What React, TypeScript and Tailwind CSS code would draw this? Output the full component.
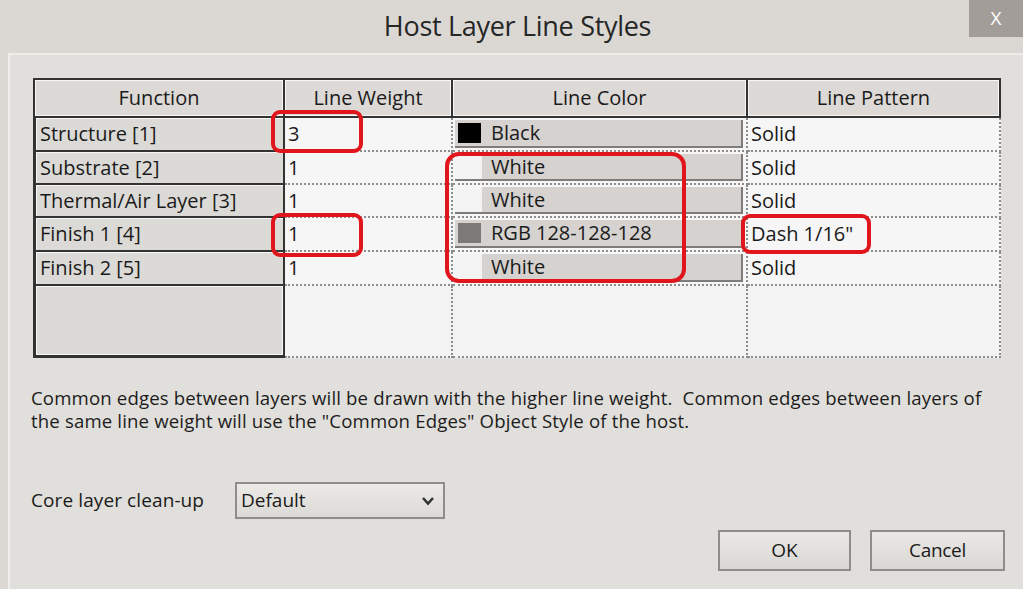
import React from 'react'

interface Layer {
  fn: string
  weight: string
  color: string
  swatch: 'black' | 'white' | 'gray'
  pattern: string
  h: string
}

const layers: Layer[] = [
  { fn: 'Structure [1]', weight: '3', color: 'Black', swatch: 'black', pattern: 'Solid', h: 'h-[34px]' },
  { fn: 'Substrate [2]', weight: '1', color: 'White', swatch: 'white', pattern: 'Solid', h: 'h-[33px]' },
  { fn: 'Thermal/Air Layer [3]', weight: '1', color: 'White', swatch: 'white', pattern: 'Solid', h: 'h-[33px]' },
  { fn: 'Finish 1 [4]', weight: '1', color: 'RGB 128-128-128', swatch: 'gray', pattern: 'Dash 1/16"', h: 'h-[34px]' },
  { fn: 'Finish 2 [5]', weight: '1', color: 'White', swatch: 'white', pattern: 'Solid', h: 'h-[34px]' },
]

function Swatch({ kind }: { kind: Layer['swatch'] }) {
  if (kind === 'black') return <div className="w-[27px] h-full p-[3px] pr-[1px] bg-[#d5d2cf]"><div className="w-full h-full bg-black" /></div>
  if (kind === 'gray') return <div className="w-[27px] h-full p-[3px] pr-[1px] bg-[#d5d2cf]"><div className="w-full h-full bg-[#7d7976]" /></div>
  return <div className="w-[27px] h-full bg-[#f3f3f3]" />
}

export default function App() {
  return (
    <div className="w-[1023px] h-[589px] bg-[#dbd8d4] flex flex-col overflow-hidden relative font-['Open_Sans','Noto_Sans',sans-serif] font-medium text-[#1a1a1a]">
      {/* Title bar */}
      <div className="h-[53px] flex shrink-0">
        <div className="flex-1" />
        <div className="pl-[12px] pt-[6px] text-[27px] text-[#262626] tracking-[-0.3px] leading-[40px]">Host Layer Line Styles</div>
        <div className="flex-1 flex justify-end">
          <div className="w-[54px] h-[37px] bg-[#a29d98] flex items-center justify-center text-white text-[19px] leading-none">X</div>
        </div>
      </div>

      {/* Client area */}
      <div className="flex-1 ml-[8px] bg-[#e1dfdb] border-t-2 border-l-2 border-[#efedeb] pl-[23px] pt-[23px] flex flex-col">
        {/* Table */}
        <div className="w-[968px] flex flex-col">
          {/* Header */}
          <div className="h-[40px] flex border-2 border-[#333] bg-[#dcd9d6] text-[20px]">
            <div className="w-[250px] border-r-2 border-[#333] shadow-[inset_1px_1px_0_#f7f7f7,inset_-1px_-1px_0_#f7f7f7] flex items-center justify-center">Function</div>
            <div className="w-[168px] border-r-2 border-[#333] shadow-[inset_1px_1px_0_#f7f7f7,inset_-1px_-1px_0_#f7f7f7] flex items-center justify-center">Line Weight</div>
            <div className="w-[295px] border-r-2 border-[#333] shadow-[inset_1px_1px_0_#f7f7f7,inset_-1px_-1px_0_#f7f7f7] flex items-center justify-center">Line Color</div>
            <div className="flex-1 shadow-[inset_1px_1px_0_#f7f7f7,inset_-1px_-1px_0_#f7f7f7] flex items-center justify-center">Line Pattern</div>
          </div>

          {/* Rows */}
          {layers.map((l) => (
            <div key={l.fn} className={`${l.h} flex text-[20px]`}>
              <div className="w-[252px] border-l-[3px] border-r-2 border-b-2 border-[#333] bg-[#dcdad7] shadow-[inset_1px_1px_0_#f7f7f7] flex items-center pl-[4px] whitespace-nowrap">{l.fn}</div>
              <div className="w-[168px] bg-[#f6f6f6] border-r-2 border-b-2 border-dotted border-[#8c8c8c] flex items-center pl-[3px]">{l.weight}</div>
              <div className="w-[295px] bg-[#f6f6f6] border-r-2 border-b-2 border-dotted border-[#8c8c8c] p-[2px] pl-[2px] pr-[3px]">
                <div className="h-full flex border-b-2 border-r-2 border-[#7e7c7a]">
                  <Swatch kind={l.swatch} />
                  <div className="flex-1 bg-[#d5d2cf] flex items-center pl-[9px] whitespace-nowrap">{l.color}</div>
                </div>
              </div>
              <div className="flex-1 bg-[#f6f6f6] border-r-2 border-b-2 border-dotted border-[#8c8c8c] flex items-center pl-[3px] whitespace-nowrap">{l.pattern}</div>
            </div>
          ))}

          {/* Empty row */}
          <div className="h-[72px] flex">
            <div className="w-[252px] border-l-[3px] border-r-2 border-b-[3px] border-[#333] bg-[#dcdad7] shadow-[inset_1px_1px_0_#f7f7f7,inset_-1px_-1px_0_#f7f7f7]" />
            <div className="w-[168px] bg-[#f3f3f3] border-r-2 border-b-2 border-dotted border-[#8c8c8c]" />
            <div className="w-[295px] bg-[#f3f3f3] border-r-2 border-b-2 border-dotted border-[#8c8c8c]" />
            <div className="flex-1 bg-[#f3f3f3] border-r-2 border-b-2 border-dotted border-[#8c8c8c]" />
          </div>
        </div>

        {/* Note */}
        <div className="mt-[27px] -ml-[2px] text-[18.6px] leading-[25px] tracking-[0.15px] text-[#1c1c1c] w-[990px]">
          <div className="whitespace-nowrap">Common edges between layers will be drawn with the higher line weight.&nbsp; Common edges between layers of</div>
          <div className="whitespace-nowrap -mt-[2px]">the same line weight will use the "Common Edges" Object Style of the host.</div>
        </div>

        {/* Core layer clean-up */}
        <div className="mt-[49px] -ml-[2px] flex items-center">
          <div className="w-[204px] text-[19px] tracking-[0.1px]">Core layer clean-up</div>
          <div className="w-[210px] h-[37px] border-2 border-[#8f8d8a] bg-gradient-to-b from-[#eceae7] to-[#dcdad6] flex items-center pl-[4px] pr-[8px] text-[19px]">
            <span className="flex-1">Default</span>
            <svg width="14" height="10" viewBox="0 0 14 10">
              <polyline points="2,2 7,7.5 12,2" fill="none" stroke="#333" strokeWidth="2.6" />
            </svg>
          </div>
        </div>

        {/* Buttons */}
        <div className="mt-[11px] flex justify-end gap-[19px] pr-[18px]">
          <div className="w-[133px] h-[41px] border-2 border-[#8f8d8a] bg-gradient-to-b from-[#ebe9e6] to-[#d9d7d3] flex items-center justify-center text-[19px]">OK</div>
          <div className="w-[135px] h-[41px] border-2 border-[#8f8d8a] bg-gradient-to-b from-[#ebe9e6] to-[#d9d7d3] flex items-center justify-center text-[19px] tracking-[-0.3px]">Cancel</div>
        </div>
      </div>

      {/* Red annotation boxes */}
      <div className="absolute left-[271px] top-[110px] w-[92px] h-[43px] border-4 border-[#e0161c] rounded-[9px]" />
      <div className="absolute left-[271px] top-[213px] w-[92px] h-[44px] border-4 border-[#e0161c] rounded-[9px]" />
      <div className="absolute left-[445px] top-[152px] w-[241px] h-[131px] border-4 border-[#e0161c] rounded-[14px]" />
      <div className="absolute left-[741px] top-[214px] w-[130px] h-[40px] border-4 border-[#e0161c] rounded-[9px]" />
    </div>
  )
}
